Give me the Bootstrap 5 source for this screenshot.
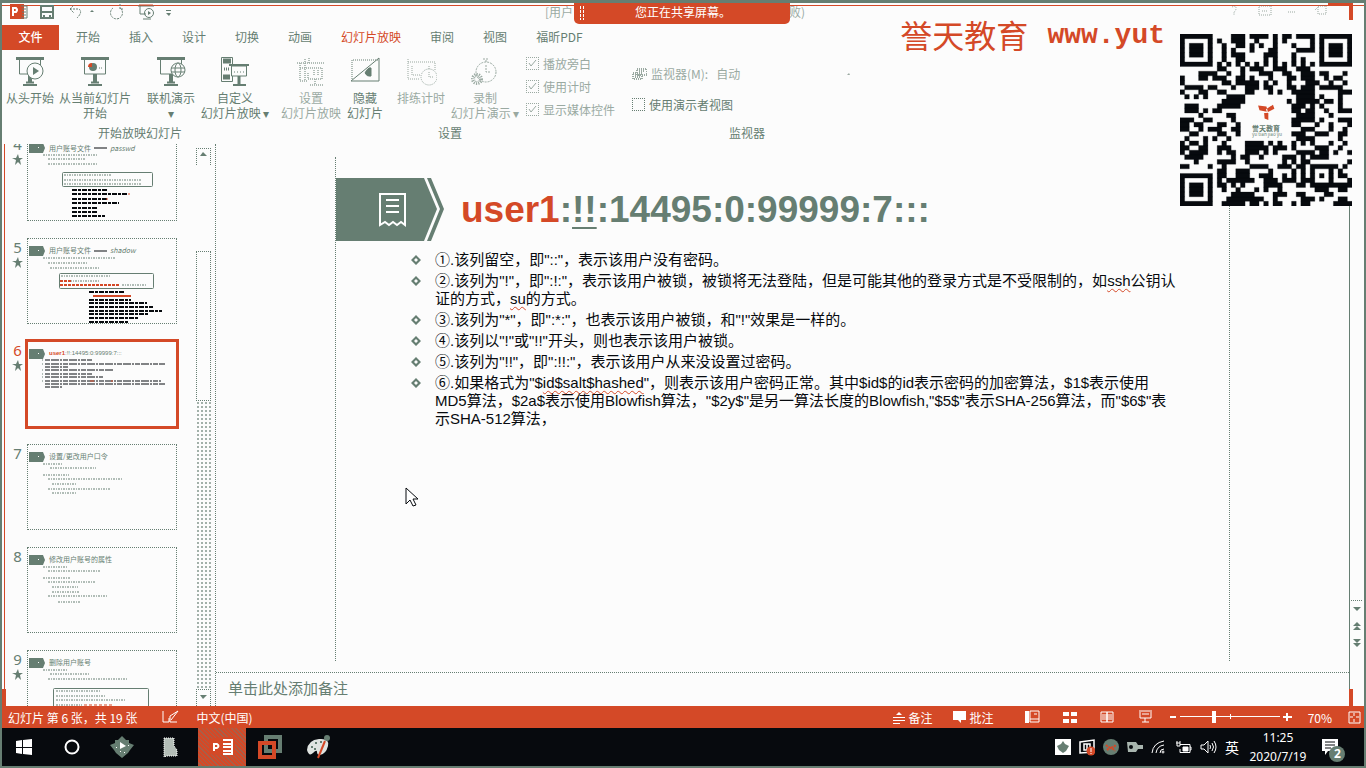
<!DOCTYPE html>
<html lang="zh-CN">
<head>
<meta charset="utf-8">
<meta name="viewport" content="width=device-width, initial-scale=1">
<title>PowerPoint</title>
<link href="https://cdn.jsdelivr.net/npm/bootstrap@5.3.0/dist/css/bootstrap.min.css" rel="stylesheet">
<style>
:root{--g:#667e72;--r:#d44927;--k:#070a0e;--w:#fcfcfc}
body{height:100vh;margin:0;background:var(--w);color:var(--g);font:12px/15px "Liberation Sans","Noto Sans CJK SC",sans-serif;border:2px solid var(--g);border-top-width:3px;overflow:hidden}
svg{display:block;flex:none}
button,a.tab{border:0;background:none;padding:0;color:inherit;font:inherit;text-decoration:none;white-space:nowrap}
.cjk{font-family:"Noto Sans CJK SC",sans-serif}
.topbar{height:22px;border-top:1px solid var(--r);margin-top:2px;padding-left:8px}
.topbar>svg{margin-top:-3px}
.tabs{height:25px;gap:29px}
.tab{padding-bottom:3px!important}
.tab.file{background:var(--r);color:#fff;width:57px;height:25px;margin-right:-12px;font-weight:500}
.tab.now{color:var(--r)}
.tools{height:95px;padding-left:2px}
.grp-one{width:272px}.grp-two{width:348px}.grp-three{width:246px}
.tool{width:58px;padding-top:6px}
.tool svg{margin:0 auto 2px}
.tool.w52{width:52px}.tool.w78{width:78px}.tool.w70{width:70px}.tool.w38{width:38px}
.off{opacity:.65}
.cap{height:24px;line-height:26px}
.checks{gap:8px;padding:6px 0 0 6px}
.tick{appearance:none;width:13px;height:13px;margin:0;border:1px dotted var(--g);background:var(--w)}
.tick:checked{background:var(--w) url("data:image/svg+xml,%3Csvg xmlns='http://www.w3.org/2000/svg' viewBox='0 0 11 11'%3E%3Cpath d='M2 5l2 3 5-6' fill='none' stroke='%23667e72'/%3E%3C/svg%3E") center/11px no-repeat}
.work{min-height:0;margin-left:2px;border-left:1px solid var(--r)}
.pane{width:211px;border-right:1px dotted var(--g)}
.deck{width:188px;overflow:hidden;padding-left:7px}
.deck ol{margin:-8px 0 0}
.deck li{height:103px;gap:5px}
.num{width:11px;font:15px/16px "Noto Sans",sans-serif;text-align:center}
.num svg{margin-top:2px}
.thumb{width:148px;height:84px;outline:1px dotted var(--g)}
.thumb.cur{outline:3px solid var(--r)}
.sb{width:15px;margin-left:3px}
.sb .end{height:17px;border:1px dotted var(--g);border-bottom:0}
.sb .grip{height:150px;border:1px dotted var(--g);margin-top:86px}
.sb .rest{background:radial-gradient(var(--g) 28%,transparent 30%) 0 0/4px 4px;opacity:.6}
.stage{padding-top:13px}
.slide{width:79%;aspect-ratio:16/9;border:1px dotted var(--g);border-width:0 1px;padding-top:21px}
.slide h1{font:bold 37px/44px "Liberation Sans",sans-serif;margin:0 0 0 17px}
.slide h1 em{color:var(--r);font-style:normal}
.slide h1 u{text-decoration-thickness:2px;text-underline-offset:5px}
.points{margin:10px 0 0;padding:0 40px 0 75px;font:15px/18px "Liberation Sans","Noto Sans CJK SC",sans-serif;color:var(--k)}
.points li{gap:14px;margin-bottom:3px}
.points svg{margin-top:4px}
.sp{text-decoration:underline wavy var(--r) 1px;text-underline-offset:2px}
.pointer{left:69px;top:330px}
.notes{height:34px;border-top:1px dotted var(--g);font-size:15px;line-height:18px;padding:6px 0 0 12px}
.vs{width:15px;border-left:1px solid var(--g);padding-bottom:56px}
.status{height:22px;background:var(--r);color:#fff}
.status .left{padding-left:6px;gap:17px}
.status .right{padding-right:3px}
.zoom{appearance:none;width:100px;height:12px;background:linear-gradient(#fff,#fff) 0 5px/100% 1px no-repeat,linear-gradient(#fff,#fff) 50px 3px/1px 5px no-repeat;margin:0 3px 0 4px}
.zoom::-webkit-slider-thumb{appearance:none;width:4px;height:12px;background:#fff}
.task{height:38px;background:var(--k);color:#fff}
.task .app{width:48px;height:38px;display:flex;align-items:center;justify-content:center}
.task .app.on{background:repeating-linear-gradient(45deg,#d44927 0 2px,#a5604a 2px 3px)}
.tray{gap:8px;padding-right:18px}
.ime{font-size:14px}
.clock{width:62px;line-height:19px;font-family:"Noto Sans",sans-serif}
.banner{top:-3px;left:42%;width:216px;height:24px;background:var(--r);color:#fff;border-radius:0 0 5px 5px;line-height:24px;padding-left:61px}
.banner svg{left:6px;top:6px}
.ghost{left:543px;right:0;top:-2px;gap:216px}
.mark-text{top:14px;right:199px;color:var(--r);font:32px/34px "Noto Sans CJK SC",sans-serif;gap:19px}
.mark-text b{font:bold 28px/38px "Liberation Mono",monospace}
.qr{top:31px;right:12px;background:var(--w)}
.corner{background:var(--r)}
.c3{right:11px;top:-1px;width:25px;height:4px}.c4{right:11px;top:-1px;width:4px;height:18px}
.c5{left:0;bottom:60px;width:4px;height:17px}.c6{right:11px;bottom:60px;width:4px;height:17px}
</style>
</head>
<body class="d-flex flex-column position-relative cjk">
<svg width="0" height="0" class="position-absolute"><defs>
<g id="screen" fill="none" stroke="#667e72"><path d="M2 2.500h28" stroke-width="3"/><path d="M5.500 4v14h21V4"/><path d="M16 18v8" stroke-width="4"/><path d="M12 26.500h8M9 29h14" stroke-width="2"/></g>
<g id="tag"><path fill="#667e72" d="M1 7h14l2 5-2 5H1z"/><path fill="#fcfcfc" d="M10 11h1v1h-1z"/></g>
<path id="star" fill="#667e72" d="M6 0l1 4h4L8 6l1 5-3-3-3 3 1-5-4-2h4z"/>
<path id="dia" fill="#667e72" fill-rule="evenodd" d="M5 0l5 5-5 5-5-5zM5 3L3 5l2 2 2-2z"/>
</defs></svg>

<header class="topbar d-flex align-items-start position-relative">
 <svg width="170" height="18" viewBox="0 0 170 18"><path fill="#d44927" d="M0 1h14v15H0z"/><path d="M3 13V5h3q2 2 0 4H3" fill="none" stroke="#fff" stroke-width="2"/><path d="M11 3h6v12h-6M12 6h4M12 9h4M12 12h4" stroke="#667e72" fill="none"/><path fill="none" stroke="#667e72" stroke-width="2" d="M31 3h12v12H31zM32 9h10M34 12v3h6v-3"/>
 <g fill="none" stroke="#667e72" stroke-dasharray="2 1"><path d="M60 6h9q4 3-2 9M60 6l4-4M60 6l4 4M103 5a6 6 0 1 0 7 0M110 1v5h4"/></g><path d="M80 9h4l-2-2z" fill="#667e72"/>
 <path fill="none" stroke="#667e72" d="M128 3h16M130 3v8h6M133 16h8"/><path d="M129 2h14" stroke="#d44927"/><circle cx="139" cy="10" r="4.500" fill="none" stroke="#667e72"/><path fill="#667e72" d="M138 8l3 2-3 2zM156 8h5v-1h-5zM156 10h5l-2 3z"/></svg>
 <div class="off position-absolute ghost d-flex text-nowrap"><span>[用户</span><span>败)</span></div>
 <svg class="ms-auto me-4 off" width="120" height="16" viewBox="0 0 120 16" fill="none" stroke="#667e72" stroke-dasharray="1 1"><path d="M12 4q4-2 4 1t-2 4v3M39 3h12v9H39zM42 8h6M68 9h7M98 3h8v8h-8zM95 7l4-4"/></svg>
</header>

<nav class="tabs d-flex align-items-center">
 <button class="tab file" type="button">文件</button>
 <a class="tab" href="#">开始</a><a class="tab" href="#">插入</a><a class="tab" href="#">设计</a><a class="tab" href="#">切换</a><a class="tab" href="#">动画</a><a class="tab now" href="#">幻灯片放映</a><a class="tab" href="#">审阅</a><a class="tab" href="#">视图</a><a class="tab" href="#">福昕PDF</a>
</nav>

<section class="tools d-flex ms-0">
 <div class="grp-one d-flex flex-column">
  <div class="d-flex flex-fill align-items-start">
   <button type="button" class="tool w52"><svg width="32" height="32"><use href="#screen"/><circle cx="21" cy="15" r="8" fill="#fcfcfc" stroke="#667e72"/><path d="M19 11l6 4-6 4z" fill="#667e72"/></svg>从头开始</button>
   <button type="button" class="tool w78"><svg width="32" height="32"><use href="#screen"/><circle cx="14" cy="11" r="4" fill="#667e72"/><path d="M13 11V7a4 4 0 0 0-4 4z" fill="#d44927"/><path d="M20 12h4" stroke="#667e72" stroke-dasharray="1 1"/></svg>从当前幻灯片<br>开始</button>
   <button type="button" class="tool ms-2"><svg width="32" height="32"><use href="#screen"/><g fill="#fcfcfc" stroke="#667e72"><circle cx="23" cy="14" r="7"/><ellipse cx="23" cy="14" rx="3" ry="7"/><path d="M16 12h14M16 16h14"/></g></svg>联机演示<br>▾</button>
   <button type="button" class="tool w70"><svg width="32" height="32" fill="none" stroke="#667e72"><path d="M2.500 1.500h11v24h-11z"/><path d="M4 5h8M4 21h7" stroke-width="5"/><path d="M5 13h6" stroke-dasharray="1 1" stroke-width="3"/><path d="M10 9h20" stroke-width="2"/><path fill="#fcfcfc" d="M12.500 10h15v10h-15z"/><path d="M15 16h10" stroke-dasharray="1 2"/><path d="M20 20v8" stroke-width="3"/><path d="M14 29h13" stroke-width="2"/></svg>自定义<br>幻灯片放映 ▾</button>
  </div>
  <div class="cap text-center">开始放映幻灯片</div>
 </div>
 <div class="grp-two d-flex flex-column">
  <div class="d-flex flex-fill align-items-start">
   <button type="button" class="tool w70 off"><svg width="32" height="32" fill="none" stroke="#667e72" stroke-dasharray="1 1"><path d="M2 7h28M5 7v18h8M5 12h22M10 3v22M14 2v6M17 12h10v11h-14v-7M20 23v6M15 29h14M19 14v6M23 14v6" stroke-width="1.500"/></svg>设置<br>幻灯片放映</button>
   <button type="button" class="tool w38"><svg width="32" height="32" fill="none" stroke="#667e72"><path d="M3 23V4h27" stroke-dasharray="1 1"/><path d="M2 25L30 2v23z"/><path d="M16 17q3-6 6-5v8q-4 1-6-3z" fill="#667e72"/></svg>隐藏<br>幻灯片</button>
   <button type="button" class="tool off ms-2"><svg width="32" height="32" fill="none" stroke="#667e72" stroke-dasharray="1 1"><path d="M3 3v20h12M3 6h27v8M7 10v9h8"/><circle cx="24" cy="21" r="8"/><path d="M24 13v-3M24 16v5h4"/></svg>排练计时</button>
   <button type="button" class="tool w70 off"><svg width="32" height="32" fill="none" stroke="#667e72" stroke-dasharray="2 1"><circle cx="17" cy="16" r="10"/><path d="M17 6V3M14 3h6M17 9v7h5"/><circle cx="8" cy="23" r="4" stroke-width="4" stroke-dasharray="1 1"/></svg>录制<br>幻灯片演示 ▾</button>
   <div class="checks d-flex flex-column off text-nowrap">
    <label class="d-flex gap-1 align-items-center"><input class="tick" type="checkbox" checked>播放旁白</label>
    <label class="d-flex gap-1 align-items-center"><input class="tick" type="checkbox" checked>使用计时</label>
    <label class="d-flex gap-1 align-items-center"><input class="tick" type="checkbox" checked>显示媒体控件</label>
   </div>
  </div>
  <div class="cap text-center">设置</div>
 </div>
 <div class="grp-three d-flex flex-column">
  <div class="flex-fill ps-2 ms-0 pt-3 position-relative">
   <div class="d-flex align-items-center off gap-1 mb-3"><svg width="15" height="14" stroke="#667e72" fill="none" stroke-dasharray="1 1"><path d="M5 2h10v6H5zM1 6h9v6H1zM3 8h6M3 10h6M7 4h6" stroke-width="2"/></svg>监视器(M):<span class="ms-1">自动</span><svg class="ms-auto" width="24" height="6"><path d="M1 4h3L3 2z" fill="#667e72"/></svg></div>
   <label class="d-flex align-items-center gap-1"><input class="tick" type="checkbox">使用演示者视图</label>
  </div>
  <div class="cap text-center">监视器</div>
 </div>
</section>

<main class="work d-flex flex-fill">
 <aside class="pane d-flex">
  <div class="deck">
   <ol class="list-unstyled">
    <li class="d-flex"><div class="num">4<svg width="11" height="11"><use href="#star"/></svg></div>
     <svg class="thumb" viewBox="0 0 148 84" font-size="7" fill="#667e72"><use href="#tag"/><text x="21" y="15">用户账号文件</text><path d="M66 12h13" stroke="#070a0e"/><text x="82" y="15" font-style="italic" font-size="7">passwd</text><g stroke="#667e72" stroke-dasharray="2 1 1 1"><path d="M15 19h55M20 23h37M20 28h50"/><path d="M36 39h48M36 44h78M36 48h78"/></g><rect x="34.500" y="36.500" width="90" height="14" rx="1" fill="none" stroke="#667e72"/><path d="M44 54h36M44 58h56M44 63h36M44 67h47M44 72h26M44 76h26M44 80h33" stroke="#070a0e" stroke-width="2" stroke-dasharray="5 1 3 1"/><path d="M100 58h2M78 63h2" stroke="#d44927"/></svg></li>
    <li class="d-flex"><div class="num">5<svg width="11" height="11"><use href="#star"/></svg></div>
     <svg class="thumb" viewBox="0 0 148 84" font-size="7" fill="#667e72"><use href="#tag"/><text x="21" y="14">用户账号文件</text><path d="M66 12h13" stroke="#070a0e"/><text x="82" y="14" font-style="italic" font-size="7">shadow</text><g stroke="#667e72" stroke-dasharray="2 1 1 1"><path d="M15 19h73M20 24h40M22 29h50M33 37h50M42 42h30M94 46h24"/></g><rect x="31.500" y="34.500" width="94" height="15" rx="1" fill="none" stroke="#667e72"/><path d="M32 42h12M32 46h60" stroke="#d44927" stroke-width="2" stroke-dasharray="3 1"/><path d="M61 53h36M61 61h42M61 64h58M61 68h64M61 72h73M61 75h60M61 79h50M61 83h39" stroke="#070a0e" stroke-width="2" stroke-dasharray="5 1 3 1"/><path d="M65 57h38" stroke="#d44927" stroke-width="2"/></svg></li>
    <li class="d-flex"><div class="num" style="color:var(--r)">6<svg width="11" height="11"><use href="#star"/></svg></div>
     <svg class="thumb cur" viewBox="0 0 148 84" font-size="6" fill="#667e72" font-family="Liberation Sans"><use href="#tag"/><text x="21" y="13"><tspan fill="#d44927" font-weight="bold">user1</tspan>:!!:14495:0:99999:7:::</text><path d="M17 18h47M17 22h120M17 25h23M17 28h68M17 32h47M17 35h58M17 39h116M17 42h120M17 45h17" stroke="#070a0e" stroke-dasharray="5 1 8 1 2 1"/><path d="M14 18h1M14 22h1M14 28h1M14 32h1M14 35h1M14 39h1" stroke="#667e72"/><path d="M62 39h4M83 39h2" stroke="#d44927"/></svg></li>
    <li class="d-flex"><div class="num">7</div>
     <svg class="thumb" viewBox="0 0 148 84" font-size="7" fill="#667e72"><use href="#tag"/><text x="21" y="14">设置/更改用户口令</text><path d="M15 19h20M22 23h46M15 30h26M20 34h75M24 39h24M20 44h62M24 48h24" stroke="#667e72" stroke-dasharray="2 1 1 1"/></svg></li>
    <li class="d-flex"><div class="num">8</div>
     <svg class="thumb" viewBox="0 0 148 84" font-size="7" fill="#667e72"><use href="#tag"/><text x="21" y="14">修改用户账号的属性</text><path d="M15 19h25M20 23h52M15 30h28M20 34h48M24 39h26M24 44h27M20 48h60M30 54h23" stroke="#667e72" stroke-dasharray="2 1 1 1"/></svg></li>
    <li class="d-flex"><div class="num">9<svg width="11" height="11"><use href="#star"/></svg></div>
     <svg class="thumb" viewBox="0 0 148 84" font-size="7" fill="#667e72"><use href="#tag"/><text x="21" y="14">删除用户账号</text><path d="M15 19h25M22 23h40M20 28h79M28 40h44M28 45h50M28 49h70M28 54h26" stroke="#667e72" stroke-dasharray="2 1 1 1"/><path d="M56 54h30" stroke="#d44927" stroke-dasharray="3 2"/><rect x="25.500" y="37.500" width="95" height="40" rx="1" fill="none" stroke="#667e72"/></svg></li>
   </ol>
  </div>
  <div class="sb d-flex flex-column"><div class="end mt-1"><svg width="13" height="14"><path d="M3 7h7L6 3z" fill="#667e72"/></svg></div><div class="grip"></div><div class="rest flex-fill"></div><div class="end"><svg width="13" height="14"><path d="M3 5h7L6 9z" fill="#667e72"/></svg></div></div>
 </aside>
 <div class="d-flex flex-column flex-fill">
  <div class="stage flex-fill">
   <article class="slide mx-auto position-relative">
    <div class="d-flex align-items-center">
     <svg width="108" height="63" viewBox="0 0 108 63"><path fill="#667e72" d="M0 0h88l13 31-13 32H0zM91 0h4l13 31-13 32h-4l13-32z"/><path fill="none" stroke="#fff" stroke-width="2" d="M44 47V16h25v31l-4-3-4 3-4-3-4 3-4-3zM50 22h13M50 28h13M50 34h13"/></svg>
     <h1><em>user1</em>:<u>!!</u>:14495:0:99999:7:::</h1>
    </div>
    <ul class="points list-unstyled">
     <li class="d-flex"><svg width="10" height="10"><use href="#dia"/></svg><span>①.该列留空，即"::"，表示该用户没有密码。</span></li>
     <li class="d-flex"><svg width="10" height="10"><use href="#dia"/></svg><span class="text-nowrap">②.该列为"!"，即":!:"，表示该用户被锁，被锁将无法登陆，但是可能其他的登录方式是不受限制的，如<span class="sp">ssh</span>公钥认<br>证的方式，<span class="sp">su</span>的方式。</span></li>
     <li class="d-flex"><svg width="10" height="10"><use href="#dia"/></svg><span>③.该列为"*"，即":*:"，也表示该用户被锁，和"!"效果是一样的。</span></li>
     <li class="d-flex"><svg width="10" height="10"><use href="#dia"/></svg><span>④.该列以"!"或"!!"开头，则也表示该用户被锁。</span></li>
     <li class="d-flex"><svg width="10" height="10"><use href="#dia"/></svg><span>⑤.该列为"!!"，即":!!:"，表示该用户从来没设置过密码。</span></li>
     <li class="d-flex"><svg width="10" height="10"><use href="#dia"/></svg><span class="text-nowrap">⑥.如果格式为"$<span class="sp">id$salt$hashed</span>"，则表示该用户密码正常。其中$id$的id表示密码的加密算法，$1$表示使用<br>MD5算法，$2a$表示使用Blowfish算法，"$2y$"是另一算法长度的Blowfish,"$5$"表示SHA-256算法，而"$6$"表<br>示SHA-512算法，</span></li>
    </ul>
    <svg class="pointer position-absolute" width="14" height="20"><path d="M1 1v16l4-4 3 6 3-1-3-6h5z" fill="#fff" stroke="#070a0e"/></svg>
   </article>
  </div>
  <div class="notes">单击此处添加备注</div>
 </div>
 <div class="vs d-flex flex-column justify-content-end align-items-center"><svg width="12" height="50"><path fill="#667e72" d="M2 7h8l-4 4zM2 26h8l-4-4zM2 30h8l-4-4zM2 39h8l-4 4zM2 43h8l-4 4z"/><path d="M0 .500h12" stroke="#667e72" stroke-dasharray="1 1"/></svg></div>
</main>

<footer>
 <div class="status d-flex align-items-center justify-content-between text-nowrap">
  <div class="left d-flex align-items-center"><span>幻灯片 第 6 张，共 19 张</span><svg class="ms-2" width="17" height="14" fill="none" stroke="#fff"><path d="M1 1v11h6V8M8 12h7M8 12V6l8-5-7 9"/></svg><span>中文(中国)</span></div>
  <div class="right d-flex align-items-center">
   <button type="button" class="d-flex align-items-center gap-1"><svg width="12" height="13" stroke="#fff"><path d="M0 6.500h12M0 9.500h12M0 12.500h7"/><path d="M3 4h6L6 1z" fill="#fff" stroke="none"/></svg>备注</button>
   <button type="button" class="d-flex align-items-center gap-1 ms-3 ps-1"><svg width="13" height="12"><path fill="#fff" d="M0 0h13v9H8v3l-3-3H0z"/></svg>批注</button>
   <svg width="176" height="14" viewBox="0 0 176 14" fill="none" stroke="#fff"><path d="M33 1v12" stroke-width="4"/><path d="M36 1h9v11h-9zM36 9h9M40 4h3"/><path d="M69 4h6M77 4h6M69 11h6M77 11h6" stroke-width="4"/><path d="M107 2h6v10h-6zM113 2h6v10h-6zM108 5h10M108 7h10M108 9h10M145 1h13M146 2v6h11V2M148 4h7M151 8v4M148 12h7"/></svg>
   <svg width="6" height="12"><path d="M0 6h6" stroke="#fff" stroke-width="2"/></svg>
   <input class="zoom" type="range" min="0" max="100" value="34" aria-label="缩放">
   <svg width="9" height="12"><path d="M0 6h9M4 2v8" stroke="#fff" stroke-width="2"/></svg>
   <span class="ms-3">70%</span>
   <svg class="ms-3" width="13" height="13" fill="none" stroke="#fff"><path d="M1 1h11v11H1zM6 2v3M6 8v3M2 6h3M8 6h3"/></svg>
  </div>
 </div>
 <div class="task d-flex align-items-center justify-content-between">
  <div class="d-flex">
   <button type="button" class="app pe-1" aria-label="开始"><svg width="16" height="16" fill="#fff"><path d="M0 2l6-1v7H0zM7 1l9-1v8H7zM0 9h6v6l-6-1zM7 9h9v7l-9-1z"/></svg></button>
   <button type="button" class="app pe-1" aria-label="搜索"><svg width="16" height="16"><circle cx="8" cy="8" r="6.500" fill="none" stroke="#fff" stroke-width="2"/></svg></button>
   <button type="button" class="app" aria-label="应用"><svg width="24" height="22"><path fill="#667e72" d="M12 0l4 4 3 0 0 3 5 2-4 5-2 3-6 5-6-5-2-3-4-5 5-2V4h3z"/><path d="M10 6l6 4-6 3zM6 11h1v1H6zM14 16h1v1h-1zM10 15h1v1h-1zM18 9h1v1h-1z" fill="#fff"/></svg></button>
   <button type="button" class="app" aria-label="文件"><svg width="15" height="21"><path d="M1 1h10v8l3 4v6H4l-3 1z" fill="#b4beb8" stroke="#fff" stroke-dasharray="1 1"/></svg></button>
   <button type="button" class="app on ms-1" aria-label="PowerPoint"><svg width="26" height="20"><path d="M0 2l14-2h12v18H14L0 17z" fill="#d44927"/><path d="M5 14V7h3q3 2 0 4H5" fill="none" stroke="#fff" stroke-width="2"/><path d="M14 3h9v14h-9M14 7h8M14 10h8M14 14h8" stroke="#fff" stroke-width="2" fill="none"/></svg></button>
   <button type="button" class="app" aria-label="虚拟机"><svg width="24" height="24" fill="none" stroke-width="4"><path d="M8 2h14v14H8z" stroke="#667e72"/><path d="M2 8h14v14H2z" stroke="#d44927"/></svg></button>
   <button type="button" class="app" aria-label="画图"><svg width="24" height="24"><path d="M1 15Q2 5 13 4t9 7-8 9q-3 0-3-3t-4 1-6-3z" fill="#dfe4e1"/><path d="M5 12h2M9 8h2M14 7h2M8 14h2" stroke="#667e72" stroke-width="2"/><path d="M19 6l-7 17" stroke="#d44927" stroke-width="2"/><circle cx="21" cy="3" r="3" fill="#667e72"/></svg></button>
  </div>
  <div class="tray d-flex align-items-center">
   <svg width="16" height="16"><path fill="#fff" d="M0 0h16v16H0z"/><path d="M8 2l2 3 4 2-3 5-3 2-4-3-2-4 4-2z" fill="#667e72"/></svg>
   <svg width="16" height="17"><path d="M1 3l14-2v12l-14 1zM5 5h6v6H5zM8 5v6" fill="none" stroke="#fff" stroke-width="1.500"/><circle cx="12" cy="12" r="4.500" fill="#d44927"/><path d="M12 9v4M12 14v1" stroke="#fff"/></svg>
   <svg width="16" height="16"><circle cx="8" cy="8" r="8" fill="#667e72"/><path d="M3 6q5 5 10 0M4 11q4-4 8 1" fill="none" stroke="#d44927" stroke-width="2" stroke-dasharray="2 1"/></svg>
   <svg width="16" height="12"><path fill="#a8b5ae" d="M0 1h9l2 3h5v4h-5l-2 3H1z"/><circle cx="4" cy="6" r="2" fill="#070a0e"/></svg>
   <svg width="16" height="14" fill="none" stroke="#fff"><path d="M1 13Q2 3 13 1M5 13Q6 6 13 5M9 13Q9 9 13 9"/><circle cx="12" cy="12" r="1"/></svg>
   <svg width="17" height="14" fill="none" stroke="#fff"><path d="M5 4.500h10v8H5V9M15 7h1v3h-1M1 3h4M2 1v5h3M5 1v5"/><path fill="#fff" d="M8 7h5v4H8z"/></svg>
   <svg width="17" height="14" fill="none" stroke="#fff"><path d="M1 5h3l4-4v12L4 9H1zM10 5q1 2 0 4M12 3q3 4 0 8M14 1q4 6 0 12"/></svg>
   <span class="ime">英</span>
   <div class="clock text-center">11:25<br>2020/7/19</div>
   <button type="button" class="ms-1 mt-2" aria-label="通知"><svg width="25" height="26"><path fill="#fff" d="M1 1h16v12H7l-3 4v-4H1z"/><path d="M4 4h10M4 7h10M4 10h6" stroke="#070a0e"/><circle cx="16" cy="16" r="8" fill="#667e72"/><text x="13" y="20" font-size="12" font-weight="bold" fill="#fff" font-family="Noto Sans">2</text></svg></button>
  </div>
 </div>
</footer>

<div class="corner c3 position-absolute"></div><div class="corner c4 position-absolute"></div><div class="corner c5 position-absolute"></div><div class="corner c6 position-absolute"></div>
<div class="banner position-absolute"><svg class="position-absolute" width="5" height="14" stroke="#fff" stroke-dasharray="3 1"><path d="M.500 0v14M3.500 0v14"/></svg>您正在共享屏幕。</div>
<div class="mark-text position-absolute d-flex text-nowrap"><span>誉天教育</span><b>www.yut</b></div>
<div class="qr position-absolute"><svg id="qr" width="172" height="172" viewBox="0 0 37 37"></svg></div>
<script>
// Dark modules of the code, one row per entry, as column runs.
const rows = `0-6 11-13 15-18 20 22-23 25-28 30-36|0 6 8 11-13 16 20 22 28 30 36|0 2-4 6 9 12-13 15 17 20 24 28 30 32-34 36|0 2-4 6 9 11 15 19-20 25-28 30 32-34 36|0 2-4 6 9 11-13 18-20 24 30 32-34 36|0 6 9 12-13 18 20 24 26 30 36|0-6 8 10 12 14 16 18 20 22 24 26 28 30-36|8-9 13 15-17 20-22 25-27|4-7 10 13 17-19 22-23 26-28 30-31 35|0 4-5 7-9 12-13 15 19 23-24 26-28 31 33-34|0 9-10 12-16 18 20 23 27-29 32 35|1-4 6-7 11 14-16 18-19 23-24 26-28 30-34|0 4-5 8-9 14-15 19 21 24-28 34-36|1 3 5 10-13 25-28 30 34|9-13 23 25-29 31-32 34|1-3 8-12 24-26 28 30 34|1-3 5 7-8 24-25 27-28 31 34-36|4 10-11 25-28 32|0-2 5-6 11 24-28 30 34-36|0-1 3-4 8-9 12 24-25 29 32 36|0-1 4 6-8 11-12 26-28 32 35|2-3 8-9 12 24-26 29-31 34-35|1 5 7 10 25-28 34|0 2-3 5 9 14-17 19 21 24 26 28 32 35|0-1 4-5 8-10 14-18 20-22 24 29-31 34|0 2-5 8 10-11 14-16 18 20 25-28 30-31 33 36|1-4 11 13-14 17 22-24 26 28-31|3 8-11 14 22 24 26-27 36|0-1 6 9 15-18 21-23 25-26 28-33 35|8-9 12-14 19 24 26 28 32 34|0-6 8-9 12-14 17-19 22 24 26 28 30 32 34-35|0 6 8 10-15 18-20 22-24 26-28 32 36|0 2-4 6 8-9 11 13 18-21 25-26 28-36|0 2-4 6 9 12 16 18 21 29-31 34-35|0 2-4 6 11-15 20-22 25-26 31-32|0 6 10-17 20 26-28 30 34-35|0-6 9-13 15-16 18 20-21 24 26-27 33-36`.split('|');
let d = '';
rows.forEach((r, y) => r.split(' ').forEach(s => { const [a, b = a] = s.split('-').map(Number); d += `M${a} ${y}h${b - a + 1}v1H${a}z`; }));
document.getElementById('qr').innerHTML = `<path d="${d}" fill="#070a0e" stroke="#070a0e" stroke-width=".06"/><g fill="#d44927" shape-rendering="auto"><path d="M16.800 15.400l1.800.2.300 1.200-1.800-.4zM20 15.200l-1.500 1 .2.700 1.600-.8zM18.100 17h.9v1.500l-.8-.3z"/></g><text x="15.500" y="20.800" font-size="1.500" font-weight="bold" fill="#667e72">誉天教育</text><text x="15.500" y="22" font-size="1" fill="#667e72">yu tian jiao yu</text>`;
</script>
<script src="https://cdn.jsdelivr.net/npm/bootstrap@5.3.0/dist/js/bootstrap.bundle.min.js"></script>
</body>
</html>
